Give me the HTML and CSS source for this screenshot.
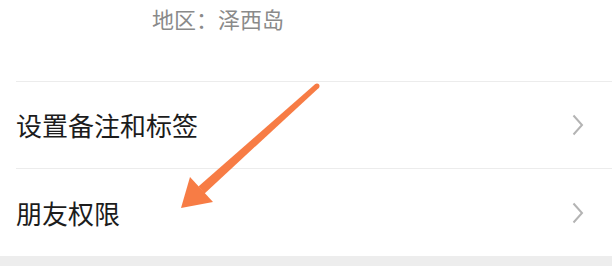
FILE: index.html
```html
<!DOCTYPE html>
<html lang="zh-CN">

<head>
    <meta charset="UTF-8">
    <meta name="viewport" content="width=device-width, initial-scale=1.0">
    <title>朋友资料</title>
    <link rel="stylesheet" href="styles.css">
</head>

<body>
    <div class="pagina">
        <!-- Região -->
        <div class="info">
            <p class="regiao">地区：泽西岛</p>
        </div>

        <!-- Lista de opções -->
        <ul class="lista">
            <li class="item">
                <span class="rotulo">设置备注和标签</span>
                <svg class="seta" width="12" height="22" viewBox="0 0 12 22">
                    <path d="M1.5 1.5 L10 11 L1.5 20.5" fill="none" stroke="#b4b4b4" stroke-width="2" />
                </svg>
            </li>
            <li class="item">
                <span class="rotulo">朋友权限</span>
                <svg class="seta" width="12" height="22" viewBox="0 0 12 22">
                    <path d="M1.5 1.5 L10 11 L1.5 20.5" fill="none" stroke="#b4b4b4" stroke-width="2" />
                </svg>
            </li>
        </ul>

        <div class="rodape"></div>

        <!-- Seta de destaque -->
        <svg class="destaque" width="612" height="266" viewBox="0 0 612 266">
            <polygon points="315.3,84.1 318.7,87.9 204.6,193.4 198.4,186.6" fill="#f77c45" />
            <circle cx="317" cy="86" r="2.5" fill="#f77c45" />
            <polygon points="181,208 190,177 213,202" fill="#f77c45" />
        </svg>
    </div>
</body>

</html>
```

FILE: styles.css
```css
body {
    margin: 0;
    background-color: #ffffff;
    font-family: "Noto Sans CJK SC", "Noto Sans", sans-serif;
}

.pagina {
    position: relative;
    width: 612px;
    height: 266px;
    overflow: hidden;
}

.info {
    height: 81px;
    padding-left: 152px;
}

.regiao {
    margin: 0;
    font-size: 22px;
    line-height: 36px;
    color: #8a8a8a;
}

.lista {
    list-style: none;
    margin: 0;
    padding: 0;
}

.item {
    display: flex;
    align-items: center;
    justify-content: space-between;
    margin-left: 16px;
    padding-right: 28px;
    border-top: 1px solid #ececec;
    height: 86px;
}

.item + .item {
    height: 87px;
}

.rotulo {
    font-size: 26px;
    color: #1c1c1c;
    line-height: 1;
}

.seta {
    display: block;
}

.rodape {
    height: 10px;
    background-color: #ededed;
}

/* Seta laranja por cima do conteúdo */
.destaque {
    position: absolute;
    left: 0;
    top: 0;
    pointer-events: none;
}
```
